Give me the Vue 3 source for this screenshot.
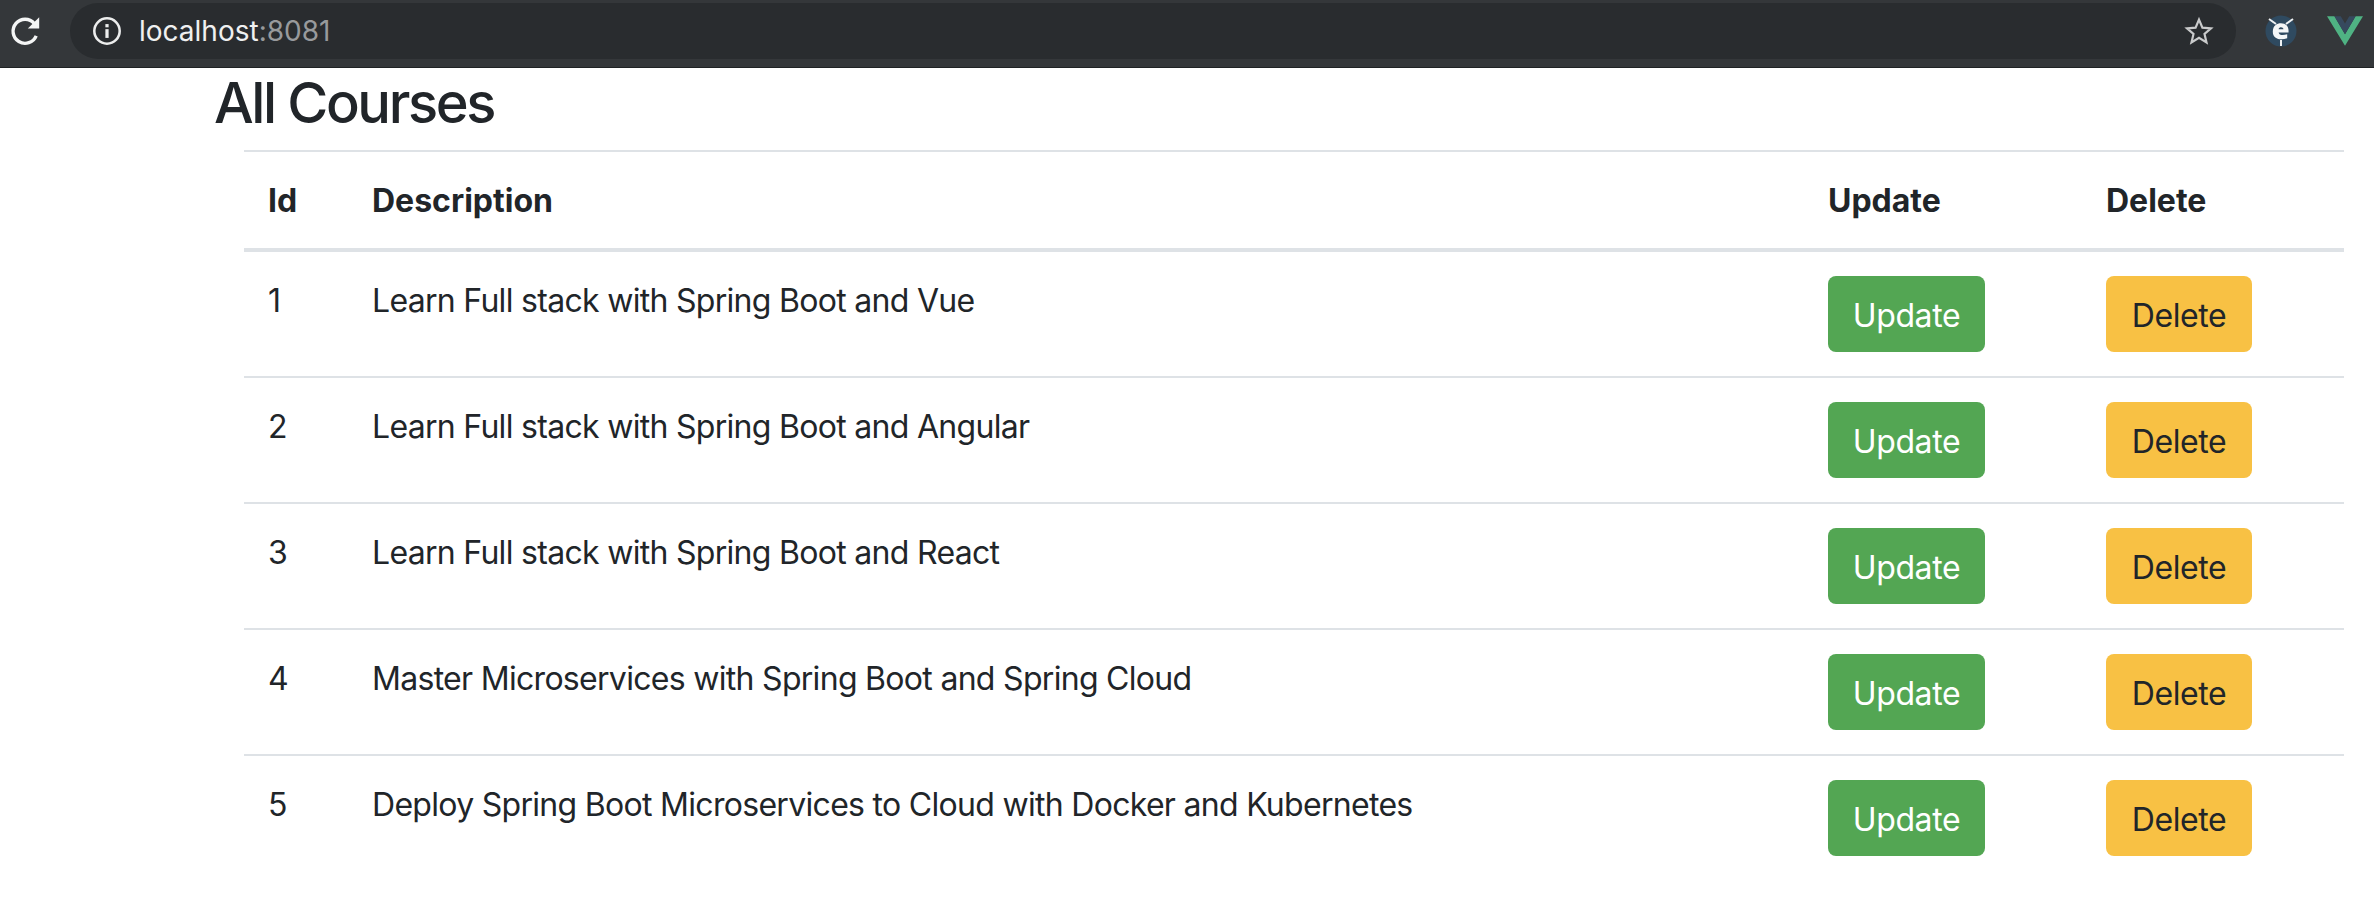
<script setup>
const courses = [
  { id: 1, description: 'Learn Full stack with Spring Boot and Vue' },
  { id: 2, description: 'Learn Full stack with Spring Boot and Angular' },
  { id: 3, description: 'Learn Full stack with Spring Boot and React' },
  { id: 4, description: 'Master Microservices with Spring Boot and Spring Cloud' },
  { id: 5, description: 'Deploy Spring Boot Microservices to Cloud with Docker and Kubernetes' },
];
</script>

<template>
  <div class="page">
    <header class="toolbar">
      <svg class="reload" width="36" height="36" viewBox="0 0 30 30">
        <path d="M23.500 19a10 10 0 1 1-1.600-10.200" fill="none" stroke="#f4f5f5" stroke-width="2.800" />
        <path d="M26 3.500V13h-9.500z" fill="#f4f5f5" />
      </svg>
      <div class="omnibox">
        <svg class="info" width="30" height="30" viewBox="0 0 26 26">
          <circle cx="13" cy="13" r="11" fill="none" stroke="#eceded" stroke-width="2.200" />
          <rect x="11.600" y="11.400" width="2.800" height="7.600" fill="#eceded" />
          <rect x="11.600" y="7" width="2.800" height="2.800" fill="#eceded" />
        </svg>
        <span class="host">localhost<span class="port">:8081</span></span>
        <svg class="star" width="30" height="30" viewBox="0 0 30 30">
          <path d="M15 3.600l3.400 8 8.600.7-6.500 5.700 2 8.400L15 21.900l-7.500 4.500 2-8.400L3 12.300l8.600-.7z" fill="none" stroke="#c9cacb" stroke-width="2.200" />
        </svg>
      </div>
      <svg class="ext-e" width="34" height="34" viewBox="0 0 34 34">
        <circle cx="17" cy="17" r="15.500" fill="#2f4a60" />
        <path d="M5 5l7 5M29 5l-7 5M17 26v6" stroke="#eef1f3" stroke-width="2" fill="none" />
        <path d="M24.500 18.500H14.600c.4 2.600 3.800 3.400 8.600 1.800v4c-6.400 2-14.400 1.200-14.400-6.600 0-8 7-9.600 11.400-8 3.500 1.300 4.700 4.900 4.300 8.800zM14.600 15.300h4.800c0-2.500-4.300-2.700-4.800 0z" fill="#f4f6f7" fill-rule="evenodd" />
      </svg>
      <svg class="ext-v" width="36" height="30" viewBox="0 0 34 28">
        <path d="M0 0h7l10 17L27 0h7L17 28z" fill="#4fb283" />
        <path d="M7 0h6l4 7 4-7h6L17 17z" fill="#36495e" />
      </svg>
    </header>

    <main class="content">
      <h3 class="title">All Courses</h3>
      <div class="table-wrap">
        <table class="table">
          <colgroup>
            <col class="col-id" />
            <col />
            <col class="col-update" />
            <col class="col-delete" />
          </colgroup>
          <thead>
            <tr>
              <th>Id</th>
              <th>Description</th>
              <th>Update</th>
              <th>Delete</th>
            </tr>
          </thead>
          <tbody>
            <tr v-for="course in courses" :key="course.id">
              <td>{{ course.id }}</td>
              <td class="desc">{{ course.description }}</td>
              <td><button class="btn btn-success">Update</button></td>
              <td><button class="btn btn-warning">Delete</button></td>
            </tr>
          </tbody>
        </table>
      </div>
    </main>
  </div>
</template>

<style>
body {
  background: #fff;
}
</style>

<style scoped>
.page {
  font-family: Inter, "Liberation Sans", sans-serif;
  color: #212529;
}
.toolbar {
  display: flex;
  align-items: center;
  height: 68px;
  box-sizing: border-box;
  padding: 2px 0 7px 8px;
  background: #34373a;
  border-bottom: 1px solid #1f2224;
}
.reload {
  flex: none;
}
.omnibox {
  flex: none;
  display: flex;
  align-items: center;
  width: 2166px;
  height: 56px;
  margin-left: 26px;
  padding: 0 22px 0 22px;
  box-sizing: border-box;
  border-radius: 28px;
  background: #292c2f;
}
.info {
  flex: none;
}
.host {
  margin-left: 17px;
  font-size: 28px;
  color: #eff0f0;
}
.port {
  color: #989a9c;
}
.star {
  margin-left: auto;
}
.ext-e {
  flex: none;
  margin-left: 28px;
}
.ext-v {
  flex: none;
  margin-left: 29px;
}
.content {
  padding: 0 30px 0 214px;
}
.title {
  margin: 0 0 11px;
  font-size: 56px;
  line-height: 71px;
  font-weight: 500;
  letter-spacing: -2.4px;
}
.table-wrap {
  margin-left: 30px;
}
.table {
  width: 100%;
  table-layout: fixed;
  border-collapse: collapse;
  font-size: 32px;
  line-height: 50px;
}
.col-id {
  width: 104px;
}
.col-update {
  width: 278px;
}
.col-delete {
  width: 262px;
}
th,
td {
  padding: 24px;
  text-align: left;
  vertical-align: top;
  border-top: 2px solid #dee2e6;
}
th {
  padding-bottom: 22px;
  font-weight: 700;
  border-bottom: 4px solid #dee2e6;
}
.desc {
  letter-spacing: -0.7px;
}
.btn {
  display: block;
  box-sizing: border-box;
  height: 76px;
  padding: 13px 0 9px;
  border: 2px solid transparent;
  border-radius: 8px;
  font-family: inherit;
  font-size: 32px;
  line-height: 50px;
  letter-spacing: -0.4px;
}
.btn-success {
  color: #fff;
  background: #53a653;
  width: 157px;
}
.btn-warning {
  color: #212529;
  background: #f8c144;
  width: 146px;
}
</style>
